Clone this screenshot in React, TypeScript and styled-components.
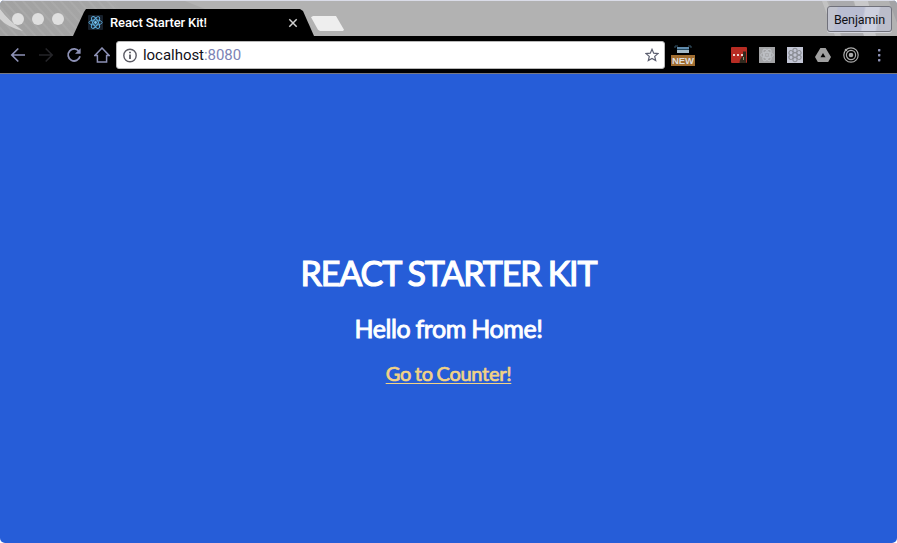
import React from 'react';
import styled, { createGlobalStyle } from 'styled-components';

const GlobalStyle = createGlobalStyle`
  * { box-sizing: border-box; }
  html, body { margin: 0; padding: 0; background: #fff; }
`;

const Window = styled.div`
  display: flex;
  flex-direction: column;
  width: 897px;
  height: 543px;
  overflow: hidden;
  border-radius: 5px;
  background: #265dd8;
  font-family: Roboto, 'Liberation Sans', sans-serif;
`;

const TitleBar = styled.header`
  position: relative;
  display: flex;
  flex: none;
  height: 36px;
  border-top: 1px solid #dadce8;
  background: #b2b2b2;
`;

const BarArt = styled.svg`
  position: absolute;
  left: 0;
  top: 0;
`;

const WindowButtons = styled.div`
  position: relative;
  display: flex;
  gap: 8px;
  padding: 12px 0 0 12px;
  width: 73px;
`;

const WindowButton = styled.span`
  width: 12px;
  height: 12px;
  border-radius: 50%;
  background: #dfdfdf;
`;

const Tab = styled.div`
  position: relative;
  display: flex;
  align-items: center;
  width: 241px;
  height: 27px;
  margin-top: 8px;
  padding: 0 16px 0 15px;
  background: #000;
  clip-path: polygon(0 100%, 11px 3px, 13px 0, 227px 0, 230px 2px, 241px 100%);
`;

const TabTitle = styled.span`
  flex: 1;
  margin-left: 7px;
  color: #fff;
  font-size: 13px;
  font-weight: 500;
  line-height: 16px;
  letter-spacing: -0.12px;
  white-space: nowrap;
`;

const NewTab = styled.div`
  position: relative;
  width: 33px;
  height: 15px;
  margin: 15px 0 0 -3px;
  background: #eee;
  clip-path: polygon(0 8%, 2px 0, 25px 0, 33px 92%, 32px 100%, 9px 100%, 7px 92%);
`;

const Profile = styled.div`
  position: relative;
  width: 65px;
  height: 26px;
  margin: 5px 5px 0 auto;
  border: 1px solid #70717b;
  border-radius: 3px;
  background: linear-gradient(100deg, #c1c3ce 0 13%, #b9bdd2 16% 54%, #cdd0df 57% 76%, #bbbdca 79%);
  color: #101014;
  font-size: 12.5px;
  line-height: 25px;
  text-align: center;
  letter-spacing: -0.1px;
  box-shadow: 0 1px 0 #d4d5dd;
`;

const Toolbar = styled.nav`
  display: flex;
  flex: none;
  align-items: center;
  height: 38px;
  padding: 1px 10px 0 10px;
  border-bottom: 1px solid #777982;
  background: #000;
`;

const NavIcons = styled.div`
  display: flex;
  gap: 12px;
  width: 106px;
`;

const Omnibox = styled.div`
  display: flex;
  align-items: center;
  width: 549px;
  height: 28px;
  padding: 0 5px 0 6px;
  border: 1px solid #b8b8b8;
  border-radius: 3px;
  background: #fff;
`;

const Address = styled.span`
  flex: 1;
  margin-left: 5px;
  color: #101018;
  font-size: 15px;
  line-height: 18px;
  letter-spacing: -0.04px;
`;

const Port = styled.span`
  color: #7c83b5;
`;

const NewExtension = styled.div`
  display: flex;
  flex-direction: column;
  align-items: center;
  width: 24px;
  height: 21px;
  margin: 1px 0 0 6px;
`;

const NewLabel = styled.span`
  width: 24px;
  height: 11px;
  margin-top: 1px;
  background: #a06d31;
  color: #dedede;
  font: bold 9.5px/11px 'Liberation Sans', sans-serif;
  text-align: center;
`;

const Extensions = styled.div`
  display: flex;
  align-items: center;
  gap: 12px;
  margin-left: 36px;
`;

const Page = styled.main`
  display: flex;
  flex: 1;
  flex-direction: column;
  align-items: center;
  padding-top: 177px;
  font-family: Lato, sans-serif;
  font-weight: 400;
  white-space: nowrap;
`;

const Title = styled.h1`
  margin: 0;
  color: #fff;
  font-size: 34px;
  font-weight: 400;
  line-height: 44px;
  letter-spacing: -1.1px;
  word-spacing: -0.3px;
  -webkit-text-stroke: 1.2px #fff;
`;

const Greeting = styled.h2`
  margin: 17px 0 0;
  color: #fff;
  font-size: 25px;
  font-weight: 400;
  line-height: 32px;
  letter-spacing: -0.4px;
  word-spacing: -0.8px;
  -webkit-text-stroke: 0.9px #fff;
`;

const CounterLink = styled.a`
  margin-top: 16px;
  color: #f2d385;
  font-size: 20px;
  line-height: 26px;
  letter-spacing: -0.28px;
  word-spacing: -1px;
  text-decoration: underline;
  text-decoration-thickness: 1px;
  text-underline-offset: 2px;
  -webkit-text-stroke: 0.7px #f2d385;
`;

const ReactLogo = () => (
  <svg width="15" height="15" viewBox="0 0 15 15">
    <rect width="15" height="15" rx="1" fill="#17202b" />
    <g fill="none" stroke="#5fafe0" strokeWidth="0.9">
      <ellipse cx="7.5" cy="7.5" rx="6.6" ry="2.6" />
      <ellipse cx="7.5" cy="7.5" rx="6.6" ry="2.6" transform="rotate(60 7.5 7.5)" />
      <ellipse cx="7.5" cy="7.5" rx="6.6" ry="2.6" transform="rotate(120 7.5 7.5)" />
    </g>
    <circle cx="7.5" cy="7.5" r="1.4" fill="#7cc6f2" />
  </svg>
);

const AtomExtension = () => (
  <svg width="16" height="16" viewBox="0 0 16 16">
    <rect width="16" height="16" fill="#a3a4a6" />
    <g fill="none" stroke="#c0c3c8" strokeWidth="1">
      <ellipse cx="8" cy="8" rx="6.3" ry="2.7" />
      <ellipse cx="8" cy="8" rx="6.3" ry="2.7" transform="rotate(60 8 8)" />
      <ellipse cx="8" cy="8" rx="6.3" ry="2.7" transform="rotate(120 8 8)" />
      <circle cx="8" cy="8" r="1" />
    </g>
  </svg>
);

const FlowerExtension = () => (
  <svg width="16" height="16" viewBox="0 0 16 16">
    <rect width="16" height="16" fill="#c2c5d4" />
    <g fill="none" stroke="#8d9097" strokeWidth="1.1">
      <circle cx="8" cy="8" r="2.3" />
      {[0, 60, 120, 180, 240, 300].map((angle) => (
        <circle key={angle} cx="8" cy="3.4" r="2.1" transform={`rotate(${angle} 8 8)`} />
      ))}
    </g>
  </svg>
);

export default function App() {
  return (
    <>
      <GlobalStyle />
      <Window>
        <TitleBar>
          <BarArt width="897" height="35" viewBox="0 0 897 35">
            <defs>
              <linearGradient id="shade">
                <stop offset="0" stopColor="#a1a1a1" />
                <stop offset="0.7" stopColor="#a6a6a6" />
                <stop offset="1" stopColor="#b2b2b2" />
              </linearGradient>
              <pattern id="grain" width="7" height="7" patternUnits="userSpaceOnUse" patternTransform="rotate(-42)">
                <path d="M3 0V7" stroke="#b5b5b5" strokeWidth="1.3" />
              </pattern>
            </defs>
            <path d="M0 0H112L150 35H0Z" fill="url(#shade)" />
            <path d="M0 0H112L150 35H0Z" fill="url(#grain)" opacity="0.55" />
            <path d="M112 0H185L215 12H124Z" fill="#a8a8a8" />
            <path d="M0 8Q8 19 23 30Q7 26 0 18Z" fill="#d2d2d2" />
            <path d="M822 0H827L841 35H835Z" fill="#c2c2c2" />
            <path d="M829 0H853L864 35H842Z" fill="#aaaaad" />
            <path d="M854 0H868L876 35H864Z" fill="#c8c8ca" />
            <path d="M889 0H897V22Z" fill="#a3a3a6" />
          </BarArt>
          <WindowButtons>
            <WindowButton />
            <WindowButton />
            <WindowButton />
          </WindowButtons>
          <Tab>
            <ReactLogo />
            <TabTitle>React Starter Kit!</TabTitle>
            <svg width="10" height="10" viewBox="0 0 10 10" stroke="#d0d0d0" strokeWidth="1.5">
              <path d="M1.3 1.3L8.7 8.7M8.7 1.3L1.3 8.7" />
            </svg>
          </Tab>
          <NewTab />
          <Profile>Benjamin</Profile>
        </TitleBar>
        <Toolbar>
          <NavIcons>
            <svg width="16" height="16" viewBox="0 0 16 16" fill="none" stroke="#8d91b5" strokeWidth="1.7">
              <path d="M15 8H2M8.3 1.5L1.8 8L8.3 14.5" />
            </svg>
            <svg width="16" height="16" viewBox="0 0 16 16" fill="none" stroke="#252529" strokeWidth="1.6">
              <path d="M1 8H14M7.7 1.5L14.2 8L7.7 14.5" />
            </svg>
            <svg width="16" height="16" viewBox="0 0 16 16" fill="none" stroke="#8d91b5" strokeWidth="1.8">
              <path d="M13.2 4.7A6 6 0 1 0 14 9.3" />
              <path d="M14.6 1.2V6.8H9Z" fill="#8d91b5" stroke="none" />
            </svg>
            <svg width="16" height="16" viewBox="0 0 16 16" fill="none" stroke="#8d91b5" strokeWidth="1.5">
              <path d="M8 1L.9 8.4H3.4V14.9H12.6V8.4H15.1Z" />
            </svg>
          </NavIcons>
          <Omnibox>
            <svg width="15" height="15" viewBox="0 0 15 15" fill="none" stroke="#5b5b64" strokeWidth="1.4">
              <circle cx="7" cy="7.5" r="6.2" />
              <path d="M7 6.5V11M7 3.8V5.3" strokeWidth="1.8" />
            </svg>
            <Address>
              localhost<Port>:8080</Port>
            </Address>
            <svg width="14" height="14" viewBox="0 0 14 14" fill="none" stroke="#5c5f70" strokeWidth="1.2">
              <path d="M7 1.3L8.7 5.2L12.9 5.6L9.7 8.4L10.7 12.6L7 10.4L3.3 12.6L4.3 8.4L1.1 5.6L5.3 5.2Z" />
            </svg>
          </Omnibox>
          <NewExtension>
            <svg width="18" height="9" viewBox="0 0 18 9">
              <path d="M1 3V1H4M14 1H17V3" fill="none" stroke="#37576b" />
              <rect x="3" y="2" width="12" height="3" fill="#5f8aab" />
              <path d="M3 5H15V8H3Z" fill="#a5bac8" />
              <path d="M3 4.5H15" stroke="#24485e" />
            </svg>
            <NewLabel>NEW</NewLabel>
          </NewExtension>
          <Extensions>
            <svg width="16" height="16" viewBox="0 0 16 16">
              <rect width="16" height="16" rx="1" fill="#b72c23" />
              <path d="M12 4.5H15V16H8.5Q8.5 12 12 9Z" fill="#30291e" />
              <path d="M12.5 10V13" stroke="#96906e" strokeWidth="1" />
              <g fill="#ecd6d2">
                <rect x="2" y="7" width="2" height="2" />
                <rect x="6" y="7" width="2" height="2" />
                <rect x="10" y="7" width="2" height="2" />
              </g>
            </svg>
            <AtomExtension />
            <FlowerExtension />
            <svg width="16" height="16" viewBox="0 0 16 16">
              <path d="M5.4 1H10.6L16 10L13.2 15H2.8L0 10Z" fill="#a0a0a0" />
              <path d="M8 6L10.5 10.2H5.5Z" fill="#000" />
            </svg>
            <svg width="16" height="16" viewBox="0 0 16 16" fill="none" stroke="#aaa" strokeWidth="1.2">
              <circle cx="8" cy="8" r="7.2" />
              <circle cx="8" cy="8" r="4.6" />
              <circle cx="8" cy="8" r="2.3" fill="#aaa" stroke="none" />
              <circle cx="3" cy="3" r="1.3" fill="#aaa" stroke="none" />
            </svg>
            <svg width="16" height="16" viewBox="0 0 16 16" fill="#8d91b5">
              <rect x="7" y="2" width="2.4" height="2.4" rx=".6" />
              <rect x="7" y="7" width="2.4" height="2.4" rx=".6" />
              <rect x="7" y="12" width="2.4" height="2.4" rx=".6" />
            </svg>
          </Extensions>
        </Toolbar>
        <Page>
          <Title>REACT STARTER KIT</Title>
          <Greeting>Hello from Home!</Greeting>
          <CounterLink href="#counter">Go to Counter!</CounterLink>
        </Page>
      </Window>
    </>
  );
}
